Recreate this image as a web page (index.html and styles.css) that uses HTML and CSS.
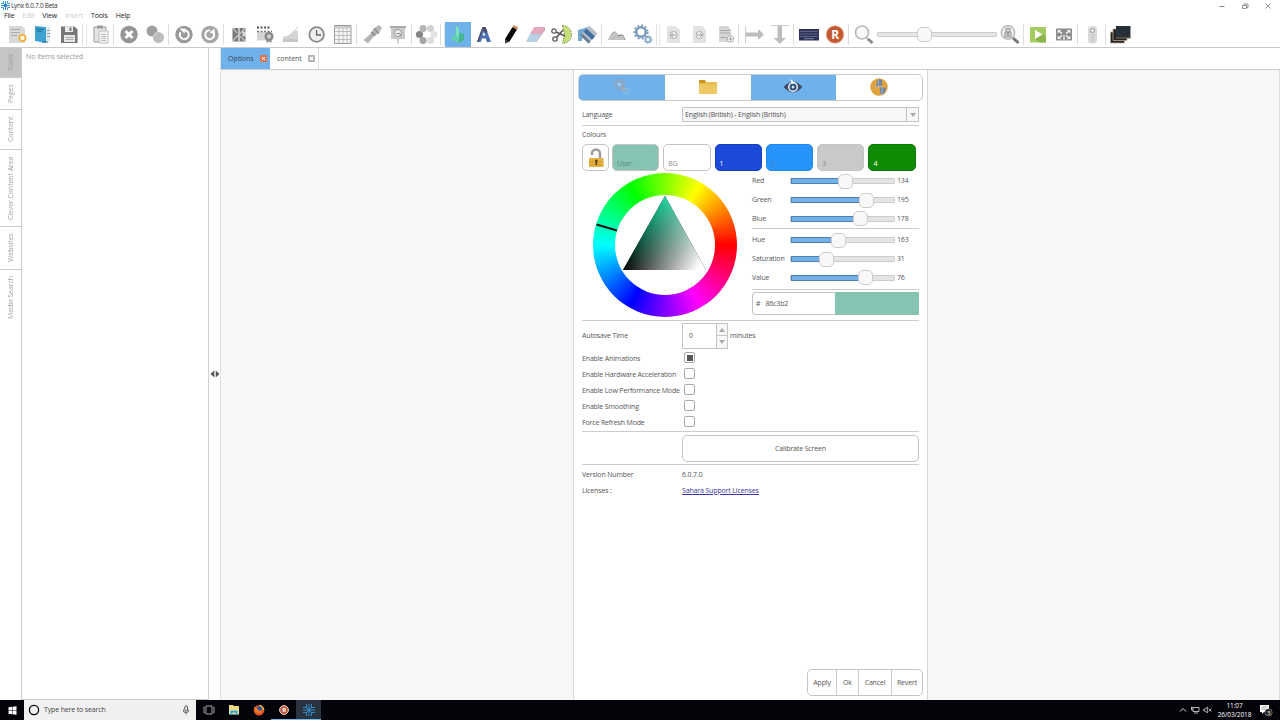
FILE: index.html
```html
<!doctype html>
<html lang="en">
<head>
    <meta charset="utf-8" />
    <meta name="viewport" content="width=device-width,initial-scale=1" />
    <title>Lynx 6.0.7.0 Beta</title>
    <link rel="stylesheet" href="styles.css">
</head>
<body>
    <header class="titlebar">
        <svg class="logo" width="9" height="9" viewBox="0 0 9 9"><g stroke="#2b8bd0" stroke-width="1" fill="none"><path d="M4.500 0v9M0 4.500h9M3 3l3 3M6 3L3 6"/><path d="M2.500 0v2.500H0M6.500 0v2.500H9M2.500 9V6.500H0M6.500 9V6.500H9" stroke-width=".9"/></g></svg>
        <span class="title">Lynx 6.0.7.0 Beta</span>
        <div class="win-buttons">
            <svg width="8" height="8" viewBox="0 0 8 8"><path d="M1.500 4.500h5" stroke="#888"/></svg>
            <svg width="8" height="8" viewBox="0 0 8 8"><path d="M1.500 3.500h4v3h-4zM3 3.500v-1.500h4v3.500h-1.500" fill="none" stroke="#777" stroke-width=".8"/></svg>
            <svg width="8" height="8" viewBox="0 0 8 8"><path d="M1.500 1.500l5 5M6.500 1.500l-5 5" stroke="#777" stroke-width=".8"/></svg>
        </div>
    </header>

    <nav class="menu">
        <span>File</span><span class="off">Edit</span><span>View</span><span class="off">Insert</span><span>Tools</span><span>Help</span>
    </nav>

    <div class="toolbar">
        <span class="tool"><svg viewBox="0 0 26 25"><path d="M5 4h13l3 3v14H5z" fill="#d8d8d8"/><path d="M7 7.500h9M7 10.500h9M7 13.500h6" stroke="#aaa"/><circle cx="18.500" cy="16" r="3" fill="#fff" stroke="#f3ad2b" stroke-width="1.600"/><path d="M18.500 11.800v1.500M18.500 18.700v1.500M14.300 16h1.500M21.200 16h1.500M15.600 13l1 1M20.500 18l1 1M21.500 13l-1 1M15.600 19l1-1" stroke="#f3ad2b"/></svg></span>
        <span class="tool"><svg viewBox="0 0 26 25"><path d="M13 6l7-1v15l-7-1z" fill="#dce8ee"/><path d="M5 4l11 1v16l-11-2z" fill="#3fa3d2"/><path d="M6.500 7l7 .5M6.500 9l5 .4" stroke="#176b9b"/><path d="M17 8.500h3M17 11.500h3M17 14.500h3" stroke="#8fa9b5"/><path d="M12 20h6" stroke="#246b8e"/></svg></span>
        <span class="tool"><svg viewBox="0 0 26 25"><path d="M5 4.500h13.500l3 3v13.500H5z" fill="#777"/><path d="M9 4.500h8v5.500H9z" fill="#eee"/><path d="M13.500 5.500h2v3.500h-2z" fill="#777"/><path d="M8 13h11v7H8z" fill="#e8e8e8"/><path d="M9.500 15.500h8M9.500 17.500h8" stroke="#aaa"/></svg></span>
        <span class="sep double"></span>
        <span class="tool"><svg viewBox="0 0 26 25"><path d="M7 5h12v15H7z" fill="#e3e3e3" stroke="#999"/><path d="M10 3.500h6v3h-6z" fill="#999"/><path d="M12 9h9v12h-9z" fill="#f4f4f4" stroke="#bbb"/><path d="M14 12.500h5M14 14.500h5M14 16.500h5M14 18.500h5" stroke="#aaa" stroke-width=".8"/></svg></span>
        <span class="sep"></span>
        <span class="tool"><svg viewBox="0 0 26 25"><circle cx="13" cy="12.500" r="8.700" fill="#959595"/><path d="M9.500 9l7 7M16.500 9l-7 7" stroke="#fff" stroke-width="3"/></svg></span>
        <span class="tool"><svg viewBox="0 0 26 25"><circle cx="10" cy="9" r="5.500" fill="#a0a0a0"/><circle cx="16.500" cy="15.500" r="5.500" fill="#bdbdbd"/><path d="M12 14a5.500 5.500 0 0 1 3.400-4" stroke="#d8d8d8" fill="none"/></svg></span>
        <span class="sep"></span>
        <span class="tool"><svg viewBox="0 0 26 25"><circle cx="13" cy="12.500" r="8.700" fill="#999"/><path d="M9.500 10.200a4.500 4.500 0 1 0 3.500-2" stroke="#fff" stroke-width="2" fill="none"/><path d="M8.500 6.500h6l-1 5z" fill="#fff"/></svg></span>
        <span class="tool"><svg viewBox="0 0 26 25"><circle cx="13" cy="12.500" r="8.700" fill="#a5a5a5"/><path d="M16.500 10.200a4.500 4.500 0 1 1-3.500-2" stroke="#fff" stroke-width="2" fill="none"/><path d="M17.500 6.500v6l-5-2z" fill="#fff"/></svg></span>
        <span class="sep"></span>
        <span class="tool"><svg viewBox="0 0 26 25"><path d="M6.500 6h13v13.500h-13z" fill="#777"/><path d="M13 6v13" stroke="#ddd" stroke-width="1.500"/><path d="M7 6l4 5M19 6l-5 6M7 19l5-6M19 19l-5-5" stroke="#c4c4c4" stroke-width="1.300"/><path d="M16.500 9.500h3.500v5h-3.500z" fill="#d8d8d8"/></svg></span>
        <span class="tool"><svg viewBox="0 0 26 25"><path d="M5 10h14v8.500H5z" fill="#d5d5d5"/><path d="M5 5.500h14" stroke="#555" stroke-width="2" stroke-dasharray="2 1.500"/><path d="M5 9.500h15" stroke="#777" stroke-width="1.600" stroke-dasharray="2 1.500"/><circle cx="17" cy="14.500" r="4.500" fill="#888"/><circle cx="17" cy="14.500" r="2.200" fill="#ccc"/><path d="M14.500 18v3l2.500-1.500 2.500 1.500v-3z" fill="#909090"/></svg></span>
        <span class="tool"><svg viewBox="0 0 26 25"><path d="M5 15c5-1 8-3 10-6h5v11H5z" fill="#d4d4d4"/><path d="M5 17h15v3H5z" fill="#c5c5c5"/><path d="M16 9l3-5 1 .5-2 5z" fill="#ddd"/></svg></span>
        <span class="tool"><svg viewBox="0 0 26 25"><circle cx="12.600" cy="12.500" r="7.300" fill="#eee" stroke="#8b8b8b" stroke-width="1.800"/><path d="M12.600 8v5h4.500" stroke="#666" stroke-width="1.300" fill="none"/></svg></span>
        <span class="tool"><svg viewBox="0 0 26 25"><path d="M4.500 3.500h16.500v18H4.500z" fill="#f5f5f5" stroke="#999"/><path d="M4.500 4h16.500v2.500H4.500z" fill="#ccc"/><path d="M4.500 9.500H21M4.500 13.500H21M4.500 17.500H21M9 6v15M13 6v15M17 6v15" stroke="#b4b4b4" stroke-width=".8"/></svg></span>
        <span class="sep"></span>
        <span class="tool"><svg viewBox="0 0 26 25"><path d="M14 7l6-4 3 3-4 6-3 1-7 8.500L4.500 18l9-8z" fill="#b4b4b4"/><path d="M13 9l4 4-1.500 1.500-4-4z" fill="#949494"/><path d="M15 6.500l5 5" stroke="#8d8d8d" stroke-width="1.300"/></svg></span>
        <span class="tool"><svg viewBox="0 0 26 25"><path d="M5 4h16v2H5z" fill="#aaa"/><path d="M6 6h14v11H6z" fill="#c9c9c9"/><circle cx="13" cy="11" r="3.500" fill="#f0f0f0" stroke="#999"/><path d="M11.500 11.500h3l1.500 2.500M13 17v2" stroke="#888" fill="none"/><circle cx="13" cy="20.500" r="1" fill="#bbb"/></svg></span>
        <span class="sep"></span>
        <span class="tool"><svg viewBox="0 0 26 25"><circle cx="9" cy="6.500" r="3.500" fill="#b5b5b5"/><circle cx="16.500" cy="6.500" r="3.500" fill="#d2d2d2"/><circle cx="5.500" cy="12.500" r="3.600" fill="#858585"/><circle cx="20" cy="12.500" r="3.500" fill="#e2e2e2"/><circle cx="9" cy="18.500" r="3.500" fill="#a5a5a5"/><circle cx="16.500" cy="18.500" r="3.500" fill="#ddd"/></svg></span>
        <span class="sep wide"></span>
        <span class="tool active"><svg viewBox="0 0 26 25"><path d="M11 4l3 2v5l5 1v6l-5 3-7-3v-5l3 1z" fill="#60cfb0"/><path d="M14 11l5 1v6l-5 3z" fill="#45b495"/><path d="M11 4v9l3 2V6z" fill="#79dfc0"/></svg></span>
        <span class="tool"><svg viewBox="0 0 26 25"><path d="M6 20L11.500 5h3L20 20h-4.200l-1-3.500h-4L9.800 20z" fill="#4c6fb0"/><path d="M11.700 13.500h2.500L13 9z" fill="#fff"/><path d="M11.500 5h3l2 5-3 1-1.500-4-4.500 13H6z" fill="#4b4a63"/></svg></span>
        <span class="tool"><svg viewBox="0 0 26 25"><path d="M15.500 5l4.500 2.500-7.500 12-4.500 2 .3-5z" fill="#090909"/><path d="M15.500 5l1.300-2 4.500 2.200L20 7.500z" fill="#cf8e69"/><path d="M8.300 17.500L8 21.500l3.500-1.700z" fill="#554a40"/></svg></span>
        <span class="tool"><svg viewBox="0 0 26 25"><path d="M11 5h11l-4 7H7z" fill="#e5a9ba"/><path d="M7 12h11l-5 8H3z" fill="#b5d1e6"/><path d="M22 5v3l-8.500 12H13l5-8z" fill="#c192b0"/></svg></span>
        <span class="tool"><svg viewBox="0 0 26 25"><path d="M13.500 3.500a9 9 0 0 1 0 18l2-9z" fill="#c5e07a" stroke="#6c8845" stroke-dasharray="1.500 1"/><circle cx="5" cy="9" r="2.200" fill="none" stroke="#555" stroke-width="1.200"/><circle cx="6" cy="17" r="2.200" fill="none" stroke="#555" stroke-width="1.200"/><path d="M7 10l9 4M7.500 15.500L14 8" stroke="#555" stroke-width="1.500"/></svg></span>
        <span class="tool"><svg viewBox="0 0 26 25"><path d="M3 8l10-3 2 3-7 4-1 7-4 0z" fill="#76a9d2"/><path d="M14 3.500l8.500 8-9 10-8-8z" fill="#b4bdc8"/><path d="M11.500 6.500l8.500 8-3 3.300-8.500-8z" fill="#416f9f"/><path d="M7 11.500l8.500 8-2 2-8-8z" fill="#687b92"/></svg></span>
        <span class="sep"></span>
        <span class="tool"><svg viewBox="0 0 26 25"><path d="M4 18c1-4 3-7 6-8l3 3 4-1 4 6z" fill="#c2c2c2"/><path d="M8 12c2-3 4-3 6 2l5-1 2 5" stroke="#909090" fill="none"/></svg></span>
        <span class="tool"><svg viewBox="0 0 26 25"><circle cx="11" cy="10" r="4.800" fill="none" stroke="#7898b8" stroke-width="2.500"/><circle cx="11" cy="10" r="6.800" fill="none" stroke="#7898b8" stroke-width="1.500" stroke-dasharray="2 2"/><circle cx="18" cy="17.500" r="2.600" fill="none" stroke="#84add0" stroke-width="1.800"/><circle cx="18" cy="17.500" r="4" fill="none" stroke="#84add0" stroke-dasharray="1.500 1.500"/></svg></span>
        <span class="sep wide near"></span>
        <span class="tool"><svg viewBox="0 0 26 25"><path d="M7 4h9l4 4v13H7z" fill="#e3e3e3"/><circle cx="13.500" cy="13" r="3.500" fill="#f8f8f8" stroke="#aaa"/><path d="M16 13h-4.500M13 11.200L11.200 13l1.800 1.800" stroke="#999" fill="none"/></svg></span>
        <span class="tool"><svg viewBox="0 0 26 25"><path d="M7 4h9l4 4v13H7z" fill="#e3e3e3"/><circle cx="13.500" cy="13" r="3.500" fill="#f8f8f8" stroke="#aaa"/><path d="M11 13h4.500M14 11.200l1.800 1.800-1.800 1.800" stroke="#999" fill="none"/></svg></span>
        <span class="tool"><svg viewBox="0 0 26 25"><path d="M7 4h9l3 4v12H7z" fill="#d6d6d6"/><path d="M8 8.500h10M8 11h10M8 15.500h6" stroke="#aaa"/><circle cx="18.500" cy="17" r="3.300" fill="#fff" stroke="#aaa"/><path d="M18.500 15v4M16.500 17h4" stroke="#999"/></svg></span>
        <span class="sep"></span>
        <span class="tool"><svg viewBox="0 0 26 25"><path d="M4.500 4v17" stroke="#ccc"/><path d="M5 10.500h12v-3.500l6 5.500-6 5.500v-3.500H5z" fill="#bdbdbd"/></svg></span>
        <span class="tool"><svg viewBox="0 0 26 25"><path d="M4 3.500h18" stroke="#ccc"/><path d="M10.500 4h4.500v12h4l-6.200 6-6.300-6h4z" fill="#bdbdbd"/></svg></span>
        <span class="sep"></span>
        <span class="tool"><svg viewBox="0 0 26 25"><path d="M3 7h20v11.500H3z" fill="#2c3157"/><path d="M4.500 9.500h17M4.500 12h17M4.500 14.500h17" stroke="#8188aa" stroke-width="1.100" stroke-dasharray="1.200 .8"/><path d="M8 16.700h10" stroke="#8188aa"/></svg></span>
        <span class="tool"><svg viewBox="0 0 26 25"><circle cx="13" cy="12.500" r="8.800" fill="#c55a32" stroke="#e9b9a2" stroke-width=".8"/><text x="9.300" y="17" class="r-mark">R</text></svg></span>
        <span class="sep"></span>
        <span class="tool"><svg viewBox="0 0 26 25"><circle cx="11" cy="10.500" r="6.500" fill="#fafafa" stroke="#bbb" stroke-width="1.700"/><path d="M15.500 15.500L17 17" stroke="#bbb" stroke-width="2"/><path d="M17 17l4.500 4" stroke="#888" stroke-width="3"/></svg></span>
        <div class="zoom-slider"><span class="zoom-track"></span><span class="knob"></span></div>
        <span class="tool"><svg viewBox="0 0 26 25"><circle cx="11" cy="10.500" r="6.700" fill="#eee" stroke="#bbb" stroke-width="1.600"/><path d="M8 10h6v5H8zM9 10V6.500h4V10" fill="#ccc" stroke="#999"/><path d="M11 10v4" stroke="#777"/><path d="M16 16l5.500 5" stroke="#777" stroke-width="3"/></svg></span>
        <span class="sep narrow"></span>
        <span class="tool"><svg viewBox="0 0 26 25"><path d="M5 5h16v15.500H5z" fill="#a5cc60"/><path d="M18 12l3 3v5.500h-6L10 17z" fill="#8bb34b"/><path d="M10 8v9l7.500-4.500z" fill="#fff"/></svg></span>
        <span class="tool"><svg viewBox="0 0 26 25"><path d="M5 6.500h16v12H5z" fill="#8d8d8d"/><path d="M7 8.500l4 3M19 8.500l-4 3M7 16.500l4-3M19 16.500l-4-3M13 13v5" stroke="#fff" stroke-width="1.200"/><path d="M7 11V8.500h3M16 8.500h3V11M7 14v2.500h3M16 16.500h3V14" stroke="#fff" stroke-width=".8" fill="none"/></svg></span>
        <span class="sep narrow"></span>
        <span class="tool"><svg viewBox="0 0 26 25"><rect x="9" y="4" width="9" height="17.500" rx="3.500" fill="#dadada"/><circle cx="13.500" cy="8.500" r="2" fill="#f5f5f5" stroke="#999"/><path d="M11.500 13h4M11.500 15.500h4M11.500 18h4" stroke="#bbb" stroke-dasharray="1 .5"/></svg></span>
        <span class="sep"></span>
        <span class="tool"><svg viewBox="0 0 26 25"><path d="M2.500 10h14v11h-14z" fill="#222" stroke="#b2aa93" stroke-width=".8"/><path d="M5 7h14v11.500H5z" fill="#222" stroke="#b2aa93" stroke-width=".8"/><path d="M8 4h14.500v12H8z" fill="#263039"/><path d="M8 16h14.500" stroke="#80745b"/></svg></span>
    </div>

    <main class="workspace">
        <aside class="side-tabs">
            <span class="side-tab tools">Tools</span>
            <span class="side-tab pages">Pages</span>
            <span class="side-tab cont">Content</span>
            <span class="side-tab clever">Clever Content Area</span>
            <span class="side-tab web">Websites</span>
            <span class="side-tab media">Media Search</span>
        </aside>
        <section class="tool-panel">No items selected</section>
        <div class="splitter"><svg width="10" height="8" viewBox="0 0 10 8"><path d="M4.300 .5v7L.5 4zM5.700 .5v7L9.500 4z" fill="#555"/></svg></div>

        <section class="document">
            <div class="doc-tabs">
                <span class="doc-tab current">Options <svg class="close" viewBox="0 0 7 7"><rect width="7" height="7" rx="1" fill="#db7355"/><path d="M2 2l3 3M5 2L2 5" stroke="#fff"/></svg></span>
                <span class="doc-tab">content <svg class="close" viewBox="0 0 7 7"><rect width="7" height="7" rx="1" fill="#b0b0b0"/><path d="M2 2l3 3M5 2L2 5" stroke="#fff" stroke-width="1.300"/></svg></span>
            </div>

            <div class="canvas">
                <div class="options">
                    <div class="pages-bar">
                        <span class="on"><svg width="20" height="20" viewBox="0 0 20 20"><circle cx="7.500" cy="7.500" r="4" fill="none" stroke="#8da7c0" stroke-width="2"/><circle cx="7.500" cy="7.500" r="5.500" fill="none" stroke="#8da7c0" stroke-dasharray="2 1.500"/><circle cx="7.500" cy="7.500" r="2" fill="#a5c6e4"/><circle cx="14" cy="14" r="2.600" fill="none" stroke="#86bdd6" stroke-width="1.500"/><path d="M10 10l3 3" stroke="#b3a89a" stroke-width="1.500"/></svg></span>
                        <span><svg width="20" height="20" viewBox="0 0 20 20"><path d="M1 3h6l1.500 2H19v12H1z" fill="#e9bd4f"/><path d="M1 3h6v3H1z" fill="#c9961e"/><path d="M1 8h18v9H1z" fill="#edc865"/></svg></span>
                        <span class="on"><svg width="20" height="20" viewBox="0 0 20 20"><path d="M.5 10Q10-.5 19.500 10 10 20.500.5 10z" fill="#414b66"/><circle cx="10" cy="10" r="5" fill="#f0f4f8"/><circle cx="10" cy="10" r="3.500" fill="#244d77"/><circle cx="10" cy="10" r="1.500" fill="#d5e5ef"/><path d="M7.500 2l1.500 5 3-1z" fill="#fff"/></svg></span>
                        <span><svg width="20" height="20" viewBox="0 0 20 20"><circle cx="10" cy="10" r="8.700" fill="#dea23e"/><path d="M10 2l3 1v5l-3 2-3-1 1-5zM11 10l6 1-1 4-3 3-2-2z" fill="#7186a1"/><path d="M9.500 1.500v10M5 9.500h8M13 10v8" stroke="#b9bdb8" stroke-width=".8"/></svg></span>
                    </div>

                    <div class="settings">
                        <div class="row language">
                            <span class="label">Language</span>
                            <div class="select"><span>English (British) - English (British)</span><i><b class="down"></b></i></div>
                        </div>

                        <div class="heading">Colours</div>
                        <div class="swatches">
                            <span class="lock"><svg width="18" height="20" viewBox="0 0 18 20"><path d="M5 7V5.500a4 4 0 0 1 8 0V10" fill="none" stroke="#9b9b9b" stroke-width="2.400"/><path d="M2 10h14.500v9H2z" fill="#e5b344"/><path d="M2 14h14.500M2 17h14.500" stroke="#d49b29"/><path d="M9.300 12v5M8 12.500h2.600" stroke="#533b17" stroke-width="1.500"/></svg></span>
                            <span class="swatch user">User</span>
                            <span class="swatch bg">BG</span>
                            <span class="swatch one">1</span>
                            <span class="swatch two">2</span>
                            <span class="swatch three">3</span>
                            <span class="swatch four">4</span>
                        </div>

                        <div class="colour-area">
                            <div class="wheel">
                                <svg width="144" height="144" viewBox="0 0 144 144">
                                    <defs>
                                        <linearGradient id="hue" gradientUnits="userSpaceOnUse" x1="72" y1="97" x2="72" y2="23"><stop offset="0" stop-color="#000"/><stop offset="1" stop-color="#1cd8a0"/></linearGradient>
                                        <linearGradient id="white" gradientUnits="userSpaceOnUse" x1="51" y1="60" x2="107" y2="92"><stop offset="0" stop-color="#000"/><stop offset="1" stop-color="#fff"/></linearGradient>
                                    </defs>
                                    <circle cx="72" cy="72" r="50" fill="#fff"/>
                                    <g class="triangle">
                                        <path d="M72 23L30 97h83z" fill="url(#hue)"/>
                                        <path class="lighten" d="M72 23L30 97h83z" fill="url(#white)"/>
                                    </g>
                                    <path d="M3.500 51.500L24 57.500" stroke="#111" stroke-width="2"/>
                                </svg>
                            </div>
                            <div class="sliders">
                                <div class="slider"><span>Red</span><div class="track"><i style="width: 52%"></i><b class="knob"></b></div><em>134</em></div>
                                <div class="slider"><span>Green</span><div class="track"><i style="width: 73%"></i><b class="knob"></b></div><em>195</em></div>
                                <div class="slider"><span>Blue</span><div class="track"><i style="width: 67%"></i><b class="knob"></b></div><em>178</em></div>
                                <hr>
                                <div class="slider"><span>Hue</span><div class="track"><i style="width: 46%"></i><b class="knob"></b></div><em>163</em></div>
                                <div class="slider"><span>Saturation</span><div class="track"><i style="width: 34%"></i><b class="knob"></b></div><em>31</em></div>
                                <div class="slider"><span>Value</span><div class="track"><i style="width: 72%"></i><b class="knob"></b></div><em>76</em></div>
                                <hr class="last">
                                <div class="hex"><span>#</span><span>86c3b2</span><i></i></div>
                            </div>
                        </div>

                        <div class="row autosave">
                            <span class="label">Autosave Time</span>
                            <div class="spinner"><span>0</span><i><b class="up"></b><b class="down"></b></i></div>
                            <span class="unit">minutes</span>
                        </div>
                        <div class="checks">
                            <div class="row check"><span class="label">Enable Animations</span><i class="box checked"></i></div>
                            <div class="row check"><span class="label">Enable Hardware Acceleration</span><i class="box"></i></div>
                            <div class="row check"><span class="label">Enable Low Performance Mode</span><i class="box"></i></div>
                            <div class="row check"><span class="label">Enable Smoothing</span><i class="box"></i></div>
                            <div class="row check"><span class="label">Force Refresh Mode</span><i class="box"></i></div>
                        </div>
                        <div class="calibrate"><button>Calibrate Screen</button></div>
                        <div class="about">
                            <div class="row"><span class="label">Version Number</span><span>6.0.7.0</span></div>
                            <div class="row"><span class="label">Licenses :</span><a href="#">Sahara Support Licenses</a></div>
                        </div>
                    </div>

                    <div class="actions"><button>Apply</button><button>Ok</button><button>Cancel</button><button>Revert</button></div>
                </div>
            </div>
        </section>
    </main>

    <footer class="taskbar">
        <span class="start"><svg width="9" height="9" viewBox="0 0 9 9"><path d="M.5 1.300L4 .8v3.400H.5zM4.500 .7L8.500 .2v4h-4zM.5 4.800H4v3.400l-3.500-.5zM4.500 4.800h4v4l-4-.5z" fill="#fff"/></svg></span>
        <div class="search">
            <svg width="12" height="12" viewBox="0 0 12 12"><circle cx="6" cy="6" r="4.600" fill="none" stroke="#000" stroke-width="1.300"/></svg>
            <span>Type here to search</span>
            <svg width="8" height="10" viewBox="0 0 8 10"><rect x="2.800" y="1" width="2.600" height="5" rx="1" fill="none" stroke="#333" stroke-width=".8"/><path d="M1.500 4.500v1.500q0 1.500 2.500 1.500t2.500-1.500V4.500M4 7.500v2" fill="none" stroke="#333" stroke-width=".7"/></svg>
        </div>
        <span class="task"><svg width="12" height="12" viewBox="0 0 12 12"><path d="M3 2h6v8H3zM1.500 3H1v6h.5M10.500 3h.5v6h-.5" fill="none" stroke="#ccc" stroke-width=".8"/></svg></span>
        <span class="task"><svg width="12" height="12" viewBox="0 0 12 12"><path d="M1 1h4l1 1h5v8H1z" fill="#f2da78"/><path d="M1 5h10v5.500H1z" fill="#eee1a0"/><path d="M2.500 11v-4.500h7v4.500h-2v-2.500h-3v2.500z" fill="#3ba6cc"/></svg></span>
        <span class="task"><svg width="12" height="12" viewBox="0 0 12 12"><circle cx="6" cy="6.200" r="5.300" fill="#e85325"/><path d="M6 .8a5.300 5.300 0 0 1 5.200 6L8 4z" fill="#f5c341"/><circle cx="6.300" cy="5.200" r="2.900" fill="#36549c"/><path d="M1 3l3 1 2 3 3-1c0 4-5 4-7 1z" fill="#f27d27"/></svg></span>
        <span class="task open"><svg width="12" height="12" viewBox="0 0 12 12"><circle cx="6" cy="6" r="4.400" fill="#b95537" stroke="#f0d9cf" stroke-width="1"/><text class="r-small" x="4.200" y="8.200">R</text></svg></span>
        <span class="task open front"><svg width="14" height="14" viewBox="0 0 14 14"><g stroke="#3a94da" stroke-width=".9" fill="none"><path d="M7 1v12M1 7h12M4 4l6 6M10 4l-6 6"/><path d="M4.500 1v3.500H1M9.500 1v3.500H13M4.500 13V9.500H1M9.500 13V9.500H13"/></g></svg></span>
        <div class="tray">
            <svg width="8" height="8" viewBox="0 0 8 8"><path d="M1 5.500l3-3 3 3" fill="none" stroke="#ddd"/></svg>
            <svg width="10" height="8" viewBox="0 0 10 8"><path d="M3 1.500h6v4H3zM4 7h4M1 1.500h2M1.500 1v3h1.500" fill="none" stroke="#ddd" stroke-width=".8"/></svg>
            <svg width="9" height="8" viewBox="0 0 9 8"><path d="M.8 3h1.500l2-2v6l-2-2H.8zM5.800 2.500l2.500 3M8.300 2.500l-2.500 3" fill="none" stroke="#ddd" stroke-width=".8"/></svg>
            <div class="clock">11:07<br>26/03/2018</div>
            <svg class="notice" width="14" height="14" viewBox="0 0 14 14"><path d="M1 2h9v7H5L3 11V9H1z" fill="#fff"/><path d="M2.500 4h6M2.500 6h4" stroke="#777" stroke-width=".7"/><circle cx="9.500" cy="9.500" r="3.700" fill="#222" stroke="#999" stroke-width=".6"/><text x="8" y="11.700" class="badge">3</text></svg>
        </div>
    </footer>
</body>
</html>
```
FILE: styles.css
```css
* { box-sizing:border-box; }
body { margin:0; width:1280px; height:720px; overflow:hidden; background:#fff; color:#555; font:7px/10px "Open Sans", sans-serif; letter-spacing:-.15px; }
svg { display:block; flex:none; }
i, em { font-style:normal; }
button { font:inherit; letter-spacing:inherit; color:inherit; background:#fff; padding:0; border:1px solid #c4c4c4; }

/* window frame */
.titlebar { height:11px; display:flex; align-items:center; color:#333; font-size:6.5px; letter-spacing:-.28px; }
.logo { margin-left:1px; }
.title { margin-left:1px; }
.win-buttons { margin-left:auto; display:flex; gap:15px; padding-right:8px; }
.menu { height:11px; display:flex; gap:8px; padding-left:4px; color:#222; }
.menu .off { color:#ccc; }
.toolbar { height:26px; display:flex; padding-left:4px; border-bottom:1px solid #c9c9c9; }
.tool { width:26px; height:25px; flex:none; }
.tool svg { width:26px; height:25px; }
.tool.active { background:#6fb1ea; }
.sep { width:3px; height:21px; margin-top:2px; flex:none; border-left:1px solid #ddd; }
.sep.double, .sep.wide { width:5px; border-right:1px dotted #ccc; }
.sep.wide.near { width:4px; }
.sep.narrow { width:2px; }
.r-mark { font:bold 12px "Open Sans", sans-serif; fill:#fff; }
.zoom-slider { width:120px; display:flex; align-items:center; }
.zoom-track { flex:1; height:5px; background:#e6e6e6; border:1px solid #ccc; border-radius:1px; }
.knob { display:block; width:15px; height:15px; flex:none; background:#f8f8f8; border:1px solid #ccc; border-radius:5px; }
.zoom-slider .knob { margin:0 65px 0 -80px; }

/* left side */
.workspace { height:652px; display:flex; }
.side-tabs { width:22px; border-right:1px solid #ccc; display:flex; flex-direction:column; }
.side-tab { width:21px; display:flex; align-items:center; justify-content:center; writing-mode:vertical-rl; transform:rotate(180deg); color:#a2a2a2; border-top:1px solid #ccc; line-height:21px; letter-spacing:-.1px; }
.side-tab.tools { height:30px; background:#c5c5c5; color:#999; }
.side-tab.pages { height:32px; }
.side-tab.cont { height:40px; }
.side-tab.clever { height:77px; }
.side-tab.web { height:43px; }
.side-tab.media { height:56px; border-top:0; }
.tool-panel { width:187px; padding:4px; color:#999; border-right:1px solid #d0d0d0; border-bottom:1px solid #ccc; letter-spacing:-.05px; }
.splitter { width:12px; display:flex; align-items:center; justify-content:center; border-right:1px solid #e2e2e2; }
.document { flex:1; display:flex; flex-direction:column; }
.doc-tabs { height:22px; display:flex; border-bottom:1px solid #ccc; letter-spacing:-.05px; }
.doc-tab { width:49px; display:flex; align-items:center; justify-content:space-between; padding:0 3px 0 7px; border-right:1px solid #ddd; }
.doc-tab.current { background:#6fb1ea; color:#345; border-right:0; }
.close { width:7px; height:7px; }
.canvas { flex:1; display:flex; justify-content:center; background:#f7f7f7; border-right:1px solid #ddd; padding-left:1px; }

/* options page */
.options { width:355px; background:#fff; border:1px solid #d6d6d6; border-width:0 1px; display:flex; flex-direction:column; padding:4px 4px; }
.pages-bar { height:27px; display:flex; border:1px solid #c8c8c8; border-radius:5px; overflow:hidden; }
.pages-bar span { flex:1; display:flex; align-items:center; justify-content:center; }
.pages-bar svg { margin-top:-1px; }
.pages-bar .on { background:#6fb1ea; }
.settings { padding:0 4px; }
.row { display:flex; align-items:center; }
.label { width:100px; flex:none; white-space:nowrap; }
.language { height:25px; padding-top:3px; border-bottom:1px solid #ccc; }
.select { width:237px; height:15px; display:flex; background:#f7f7f7; border:1px solid #c4c4c4; line-height:13px; padding-left:2px; }
.select span { flex:1; }
.select i { width:12px; display:flex; align-items:center; justify-content:center; border-left:1px solid #c4c4c4; }
.down, .up { display:block; border:3px solid transparent; }
.down { border-top:4px solid #aaa; border-bottom:0; }
.up { border-bottom:4px solid #aaa; border-top:0; }
.heading { height:18px; padding-top:4px; }
.swatches { display:flex; height:27px; gap:4px; }
.swatches span { border:1px solid #c4c4c4; border-radius:5px; }
.lock { width:27px; display:flex; align-items:center; justify-content:center; margin-right:-1px; }
.swatch { width:47.300px; padding:14px 4px 0; }
.user { background:#86c3b2; color:#5d897d; }
.bg { color:#888; }
.swatches .one { background:#1b49d8; border-color:#1640b9; color:#fff; }
.swatches .two { background:#2694fb; border-color:#2388e8; color:#4580b5; }
.three { background:#c9c9c9; color:#888; }
.swatches .four { background:#108b05; border-color:#0c7a03; color:#fff; }
.colour-area { height:150px; display:flex; border-bottom:1px solid #ccc; padding-top:2px; }
.wheel { width:144px; height:144px; margin-left:11px; border-radius:50%; background:conic-gradient(from 90deg, #f00, #f0f, #00f, #0ff, #0f0, #ff0, #f00); }
.triangle { isolation:isolate; }
.lighten { mix-blend-mode:screen; }
.sliders { width:167px; margin:-1px 0 0 15px; }
.slider { height:18.700px; display:flex; align-items:center; }
.slider > span { width:38px; }
.track { width:105px; height:6px; display:flex; align-items:center; background:#e4e4e4; border:1px solid #ccc; border-radius:1px; }
.track i { height:6px; flex:none; background:#74b0e6; border:1px solid #4c82b4; }
.track .knob { margin-left:-7px; }
.slider em { margin-left:2px; }
.sliders hr { margin:0; height:1px; border:0; background:#ccc; margin-bottom:2px; }
.sliders .last { margin:2px 0 2px; }
.hex { height:23px; display:flex; align-items:center; border:1px solid #c4c4c4; border-right:0; border-radius:4px 0 0 4px; padding-left:3px; gap:5px; }
.hex i { width:84px; height:23px; margin-left:auto; background:#86c3b2; }
.autosave { height:30px; }
.spinner { width:46px; height:26px; display:flex; align-items:center; border:1px solid #c4c4c4; }
.spinner span { flex:1; padding-left:6px; }
.spinner i { width:11px; height:24px; display:flex; flex-direction:column; align-items:center; justify-content:space-around; background:linear-gradient(#f8f8f8 11px, #c4c4c4 11px, #c4c4c4 12px, #f8f8f8 12px); border-left:1px solid #c4c4c4; }
.unit { margin-left:2px; }
.checks { height:81px; border-bottom:1px solid #ccc; }
.check { height:16px; }
.box { width:11px; height:11px; margin:-3px 0 0 2px; border:1px solid #aaa; border-radius:2px; padding:1.500px; }
.checked { background:#555 content-box; }
.calibrate { height:33px; padding:3px 0; border-bottom:1px solid #ccc; }
.calibrate button { display:block; width:237px; height:27px; margin-left:100px; border-radius:5px; }
.about { padding-top:2px; }
.about .row { height:16px; }
.about a { color:#3b36a5; }
.actions { margin-top:auto; align-self:flex-end; display:flex; height:27px; border:1px solid #c4c4c4; border-radius:5px; }
.actions button { border:0; border-right:1px solid #ccc; background:none; width:29px; }
.actions button:nth-child(2) { width:22px; }
.actions button:nth-child(3) { width:33px; }
.actions button:last-child { width:30px; border-right:0; }

/* taskbar */
.taskbar { height:20px; display:flex; background:#02040a; color:#fff; }
.start { width:24px; display:flex; align-items:center; justify-content:center; }
.search { width:172px; display:flex; align-items:center; gap:4px; padding:0 6px 0 4px; background:#f0f0f0; color:#444; }
.search span { flex:1; }
.task { width:25px; display:flex; align-items:center; justify-content:center; }
.open { border-bottom:1px solid #76b9ed; }
.front { background:#2a3340; }
.r-small { font:bold 6px "Open Sans", sans-serif; fill:#fff; }
.tray { margin-left:auto; display:flex; align-items:center; gap:3px; padding-right:7px; }
.clock { width:37px; margin-left:1px; text-align:center; font-size:6.5px; line-height:9px; letter-spacing:-.1px; }
.notice { margin-left:3px; }
.badge { font:6px "Open Sans", sans-serif; fill:#fff; }
```
